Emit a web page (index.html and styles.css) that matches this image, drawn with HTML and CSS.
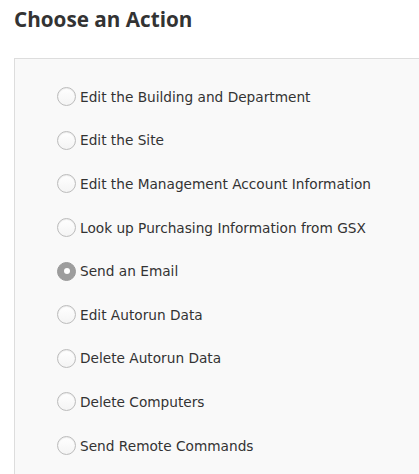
FILE: index.html
```html
<!DOCTYPE html>
<html>
<head>
<meta charset="utf-8">
<link rel="stylesheet" href="styles.css">
</head>
<body>
<h1 class="title">Choose an Action</h1>
<div class="panel">
  <ul class="actions">
    <li class="action"><span class="radio"></span><span class="label">Edit the Building and Department</span></li>
    <li class="action"><span class="radio"></span><span class="label">Edit the Site</span></li>
    <li class="action"><span class="radio"></span><span class="label">Edit the Management Account Information</span></li>
    <li class="action"><span class="radio"></span><span class="label">Look up Purchasing Information from GSX</span></li>
    <li class="action"><span class="radio checked"></span><span class="label">Send an Email</span></li>
    <li class="action"><span class="radio"></span><span class="label">Edit Autorun Data</span></li>
    <li class="action"><span class="radio"></span><span class="label">Delete Autorun Data</span></li>
    <li class="action"><span class="radio"></span><span class="label">Delete Computers</span></li>
    <li class="action"><span class="radio"></span><span class="label">Send Remote Commands</span></li>
  </ul>
</div>
</body>
</html>
```
FILE: styles.css
```css
html, body {
  margin: 0;
  padding: 0;
  background: #ffffff;
  overflow: hidden;
  height: 100%;
}
body {
  font-family: "DejaVu Sans", "Open Sans", sans-serif;
  color: #333333;
  padding-left: 14px;
  display: flex;
  flex-direction: column;
}
.title {
  margin: 0;
  padding-top: 5px;
  height: 58px;
  flex: none;
  box-sizing: border-box;
  font-family: "Open Sans", sans-serif;
  font-weight: 700;
  font-size: 20.7px;
  line-height: 28px;
  color: #333333;
}
.panel {
  background: #f9f9f9;
  border-top: 1px solid #dddddd;
  border-left: 1px solid #dddddd;
  flex: 1;
  min-height: 0;
  overflow: hidden;
}
.actions {
  list-style: none;
  margin: 0;
  padding: 16px 0 0 42px;
}
.action {
  display: flex;
  align-items: center;
  gap: 4px;
  height: 43.6px;
  font-size: 13.7px;
}
.radio {
  width: 17px;
  height: 17px;
  border-radius: 50%;
  border: 1px solid #bcbcbc;
  background: linear-gradient(#ffffff, #f4f4f4);
  box-shadow: inset 0 1px 1px rgba(0,0,0,0.08);
  flex: none;
  position: relative;
}
.radio.checked {
  border-color: #9a9a9a;
  background: #9d9d9d;
  box-shadow: none;
}
.radio.checked::after {
  content: "";
  position: absolute;
  left: 5.5px;
  top: 5.5px;
  width: 6px;
  height: 6px;
  border-radius: 50%;
  background: #ffffff;
}
.label {
  color: #333333;
}
```
